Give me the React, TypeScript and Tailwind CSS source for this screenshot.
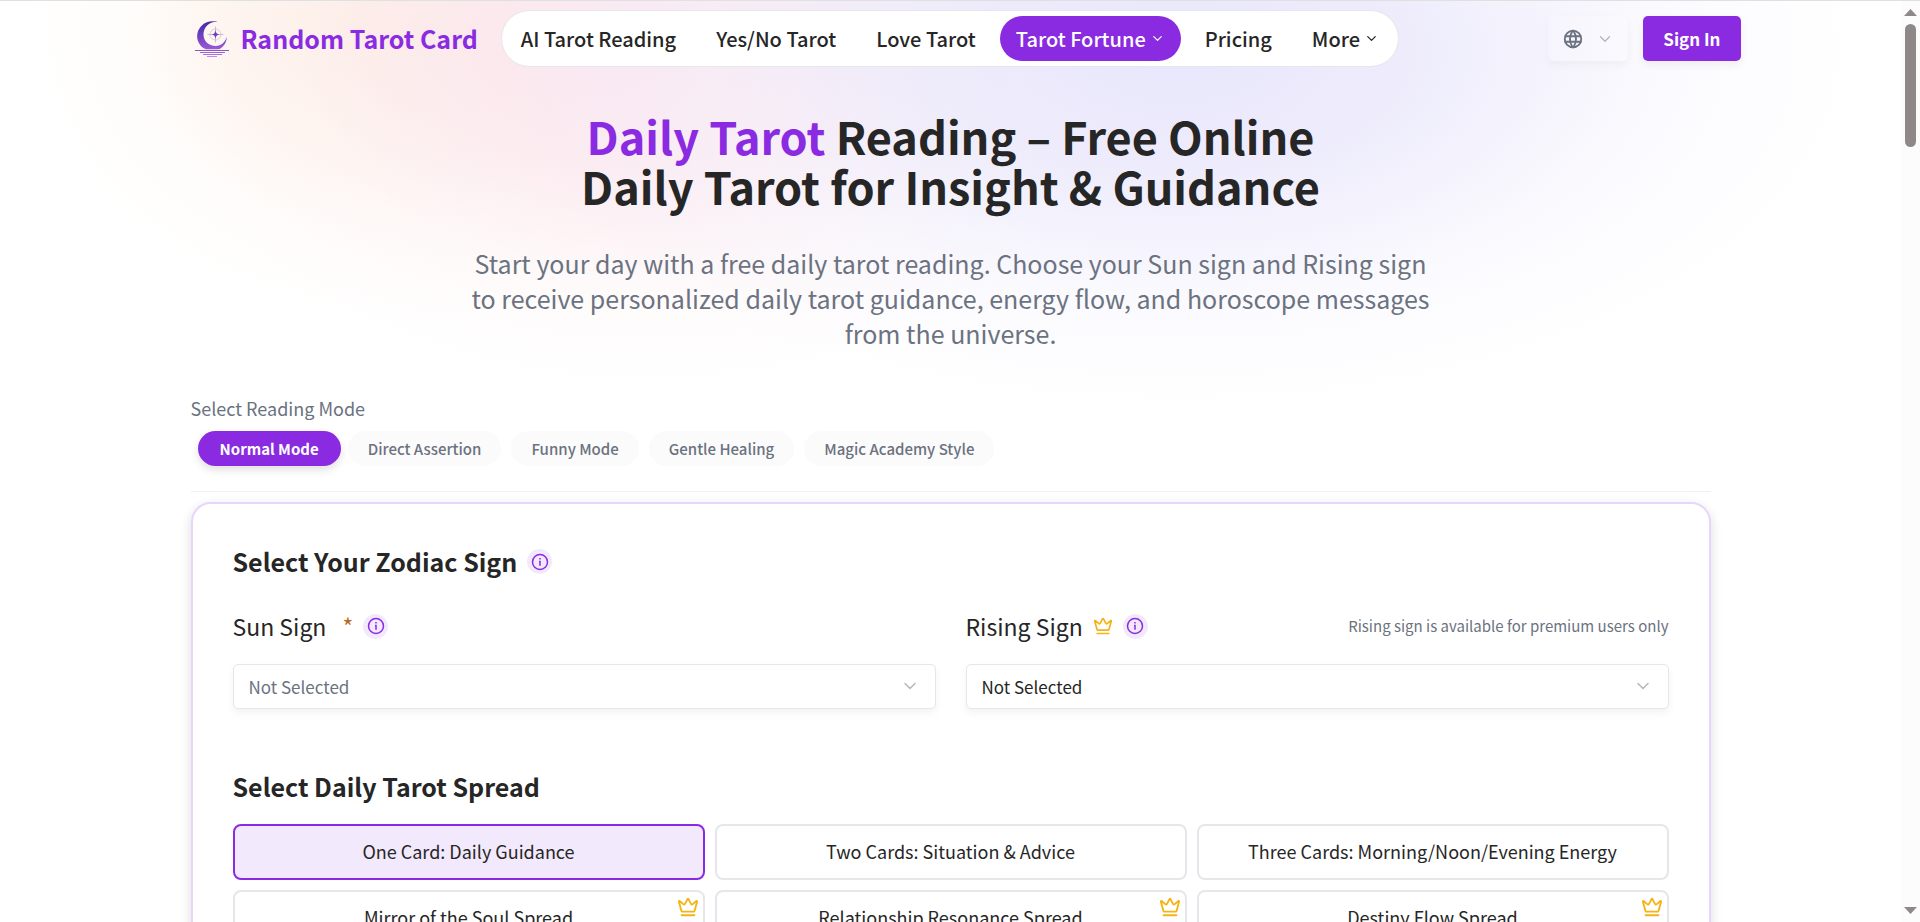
import { useState } from "react";
import { ChevronDown, Crown } from "lucide-react";
import { TbWorld } from "react-icons/tb";

const navItems = [
  { label: "AI Tarot Reading" },
  { label: "Yes/No Tarot" },
  { label: "Love Tarot" },
  { label: "Tarot Fortune", menu: true, active: true },
  { label: "Pricing" },
  { label: "More", menu: true },
];

const modes = [
  "Normal Mode",
  "Direct Assertion",
  "Funny Mode",
  "Gentle Healing",
  "Magic Academy Style",
];

const spreads = [
  { label: "One Card: Daily Guidance" },
  { label: "Two Cards: Situation & Advice" },
  { label: "Three Cards: Morning/Noon/Evening Energy" },
  { label: "Mirror of the Soul Spread", premium: true },
  { label: "Relationship Resonance Spread", premium: true },
  { label: "Destiny Flow Spread", premium: true },
];

const signs = [
  "Aries",
  "Taurus",
  "Gemini",
  "Cancer",
  "Leo",
  "Virgo",
  "Libra",
  "Scorpio",
  "Sagittarius",
  "Capricorn",
  "Aquarius",
  "Pisces",
];

const MoonLogo = () => (
  <svg className="h-9 w-[34px] shrink-0" viewBox="0 0 34 36" fill="none" aria-hidden="true">
    <defs>
      <linearGradient id="moon" x1="16" y1="0" x2="16" y2="36" gradientUnits="userSpaceOnUse">
        <stop offset="0" stopColor="#3f2aa8" />
        <stop offset="0.5" stopColor="#7a45c4" />
        <stop offset="1" stopColor="#b06be6" />
      </linearGradient>
    </defs>
    <path
      d="M24 1.500C18.500-.8 11.500 0 6.800 4.500 1 10 .6 19 5.500 24.500c1.500 1.700 3.300 2.900 5.300 3.700h13.400c4.800-2.400 7.600-7.200 7.600-12.400-1.500 5.400-5.800 9.200-11 9.200C13.500 25 8.500 20 8.500 13.500c0-6.200 4.300-11.400 10.500-12.400 1.600-.2 3.400-.1 5 .4Z"
      fill="url(#moon)"
    />
    <circle cx="20.500" cy="13.500" r="5.500" stroke="#c9bfd6" strokeWidth="0.700" />
    <path d="M20.500 5.500v16M12.500 13.500h16" stroke="#b7a9cc" strokeWidth="0.700" />
    <path
      d="M20.500 9c.5 3 1.200 4 4 4.500-2.800.5-3.500 1.500-4 4.500-.5-3-1.200-4-4-4.500 2.800-.5 3.500-1.500 4-4.500Z"
      fill="#6d3fc0"
    />
    <path d="M0 29.500h34" stroke="#8a55cc" strokeWidth="1.200" />
    <path d="M5 31.500h25" stroke="#9a63d8" strokeWidth="1" />
    <path d="M8 33.500h19" stroke="#a970e0" strokeWidth="1" />
    <path d="M12 35.500h10" stroke="#b77fe8" strokeWidth="0.900" />
  </svg>
);

const InfoButton = ({ label }: { label: string }) => (
  <button
    type="button"
    aria-label={label}
    className="flex size-[25px] items-center justify-center rounded-full bg-[#f3e9fc] text-[#8a2be2]"
  >
    <svg className="size-5" viewBox="0 0 24 24" fill="none" stroke="currentColor" strokeWidth="1.800" aria-hidden="true">
      <circle cx="12" cy="12" r="9" />
      <path d="M12 7.200v1.800M10.800 11.500H12V16.500" />
    </svg>
  </button>
);

const SignSelect = ({ id, muted }: { id: string; muted?: boolean }) => (
  <div className="relative mt-[23px]">
    <select
      id={id}
      className={`${
        muted ? "text-[#6b7280]" : "text-[#262626]"
      } h-[45px] w-full appearance-none rounded-[5px] border border-[#e5e7eb] bg-white px-[15px] text-[17px] shadow-[0_4px_8px_rgba(0,0,0,0.05)]`}
    >
      <option>Not Selected</option>
      {signs.map((sign) => (
        <option key={sign}>{sign}</option>
      ))}
    </select>
    <ChevronDown
      className="pointer-events-none absolute top-3 right-4 size-5 text-[#b4b7bd]"
      strokeWidth={1.8}
    />
  </div>
);

const Header = () => (
  <header className="mx-auto flex w-full max-w-[1580px] items-center pt-[9px] pl-[34px]">
    <a href="#" className="flex items-center gap-3 text-[25px] leading-[35px] font-bold text-[#8a2be2]">
      <MoonLogo />
      Random Tarot Card
    </a>
    <nav className="ml-[23px] flex h-[57px] items-center gap-2 rounded-full border border-[#e5e7eb] bg-white px-[3px]">
      {navItems.map((item) => (
        <a
          key={item.label}
          href="#"
          className={`${
            item.active ? "bg-[#8a2be2] text-white" : "text-[#262626]"
          } flex h-[45px] items-center gap-1 rounded-full px-4 text-[20px] leading-[30px] font-medium`}
        >
          {item.label}
          {item.menu && <ChevronDown className="size-[15px]" strokeWidth={2} />}
        </a>
      ))}
    </nav>
    <div className="ml-auto flex gap-[15px]">
      <button
        type="button"
        aria-label="Language"
        className="flex h-[45px] items-center gap-3 rounded-[5px] bg-white/15 px-[14px] shadow-[0_4px_8px_rgba(0,0,0,0.04)]"
      >
        <TbWorld className="size-[22px] text-[#6b7280]" />
        <ChevronDown className="size-[18px] text-[#b4b7bd]" strokeWidth={1.8} />
      </button>
      <button
        type="button"
        className="h-[45px] rounded-[5px] bg-[#8a2be2] px-5 text-[17px] leading-[25px] font-bold text-white shadow-[0_4px_8px_rgba(0,0,0,0.06)]"
      >
        Sign In
      </button>
    </div>
  </header>
);

const App = () => {
  const [mode, setMode] = useState(modes[0]);
  const [spread, setSpread] = useState(spreads[0].label);

  return (
    <div className="flex h-screen overflow-hidden bg-white font-['Noto_Sans_CJK_SC',sans-serif] text-[#262626]">
      <div className="min-w-0 flex-1 border-t border-[#e0e0e0] bg-[radial-gradient(ellipse_36%_360px_at_62%_50px,#e8e6fb_0%,#eae8fbcc_35%,#f4f2fd66_70%,#ffffff00_100%),radial-gradient(ellipse_26%_340px_at_34%_50px,#fae4ee_0%,#fbe7eecc_35%,#fdf3f466_70%,#ffffff00_100%),radial-gradient(ellipse_19%_300px_at_20%_20px,#fdebdf_0%,#fdf0e6b3_40%,#fff9f466_70%,#ffffff00_100%)] bg-no-repeat">
        <Header />

        <main className="mx-auto w-full max-w-[1520px]">
          <section className="mt-11 text-center">
            <h1 className="text-[45px] leading-[50px] font-bold">
              <span className="text-[#8a2be2]">Daily Tarot</span> Reading – Free Online
              <br />
              Daily Tarot for Insight &amp; Guidance
            </h1>
            <p className="mx-auto mt-[35px] max-w-[980px] text-[25px] leading-[35px] text-[#6b7280]">
              Start your day with a free daily tarot reading. Choose your Sun sign and Rising sign
              to receive personalized daily tarot guidance, energy flow, and horoscope messages
              from the universe.
            </p>
          </section>

          <section className="mt-[45px] border-b border-[#f1f1f3] pb-[25px]">
            <h2 className="text-[18px] leading-[25px] text-[#6b7280]">Select Reading Mode</h2>
            <div className="mt-[10px] flex items-center gap-[10px] pl-[10px]">
              {modes.map((name) => (
                <button
                  key={name}
                  type="button"
                  onClick={() => setMode(name)}
                  className={`${
                    mode === name
                      ? "-mx-[3px] bg-[#8a2be2] px-[22px] font-bold text-white shadow-[0_4px_8px_rgba(0,0,0,0.12)]"
                      : "bg-[#fbfbfb] px-5 font-medium text-[#6b7280]"
                  } h-[35px] rounded-full text-[15px] leading-[20px]`}
                >
                  {name}
                </button>
              ))}
            </div>
          </section>

          <section className="mt-[10px] rounded-[20px] border-2 border-[#e8d5f9] bg-white p-10 shadow-[0_4px_12px_rgba(0,0,0,0.14)]">
            <div className="flex items-center gap-[10px]">
              <h2 className="text-[25px] leading-[35px] font-bold">Select Your Zodiac Sign</h2>
              <InfoButton label="About zodiac signs" />
            </div>

            <div className="mt-8 grid grid-cols-2 gap-[30px]">
              <div>
                <div className="flex items-center gap-[10px]">
                  <label htmlFor="sun-sign" className="flex gap-4 text-[23px] leading-[30px]">
                    Sun Sign
                    <span className="text-[#b8691f]">*</span>
                  </label>
                  <InfoButton label="About the sun sign" />
                </div>
                <SignSelect id="sun-sign" muted />
              </div>
              <div>
                <div className="flex items-center gap-[10px]">
                  <label htmlFor="rising-sign" className="text-[23px] leading-[30px]">
                    Rising Sign
                  </label>
                  <Crown className="size-5 text-[#f5b314]" />
                  <InfoButton label="About the rising sign" />
                  <span className="ml-auto text-[15px] leading-[20px] text-[#6b7280]">
                    Rising sign is available for premium users only
                  </span>
                </div>
                <SignSelect id="rising-sign" />
              </div>
            </div>

            <h2 className="mt-[60px] text-[25px] leading-[35px] font-bold">Select Daily Tarot Spread</h2>
            <div className="mt-5 grid grid-cols-3 gap-[10px]">
              {spreads.map(({ label, premium }) => (
                <button
                  key={label}
                  type="button"
                  onClick={() => setSpread(label)}
                  className={`${
                    spread === label ? "border-[#8a2be2] bg-[#f3e9fc]" : "border-[#e5e7eb] bg-white"
                  } relative h-14 rounded-lg border-2 pb-[2px] text-[18px] leading-[25px]`}
                >
                  {label}
                  {premium && <Crown className="absolute top-1 right-1 size-[22px] text-[#f5b314]" />}
                </button>
              ))}
            </div>
          </section>
        </main>
      </div>

      {/* scroll track */}
      <div className="flex w-[19px] shrink-0 flex-col items-center border-t border-[#e0e0e0] bg-[#fcfcfc] py-2" aria-hidden="true">
        <svg className="h-[7px] w-[13px]" viewBox="0 0 13 7" fill="#8f8888">
          <path d="M6.500 0 13 7H0Z" />
        </svg>
        <div className="mt-2 h-[123px] w-[11px] rounded-full bg-[#8f8888]" />
        <svg className="mt-auto h-[7px] w-[13px]" viewBox="0 0 13 7" fill="#8f8888">
          <path d="M0 0h13L6.500 7Z" />
        </svg>
      </div>
    </div>
  );
};

export default App;
